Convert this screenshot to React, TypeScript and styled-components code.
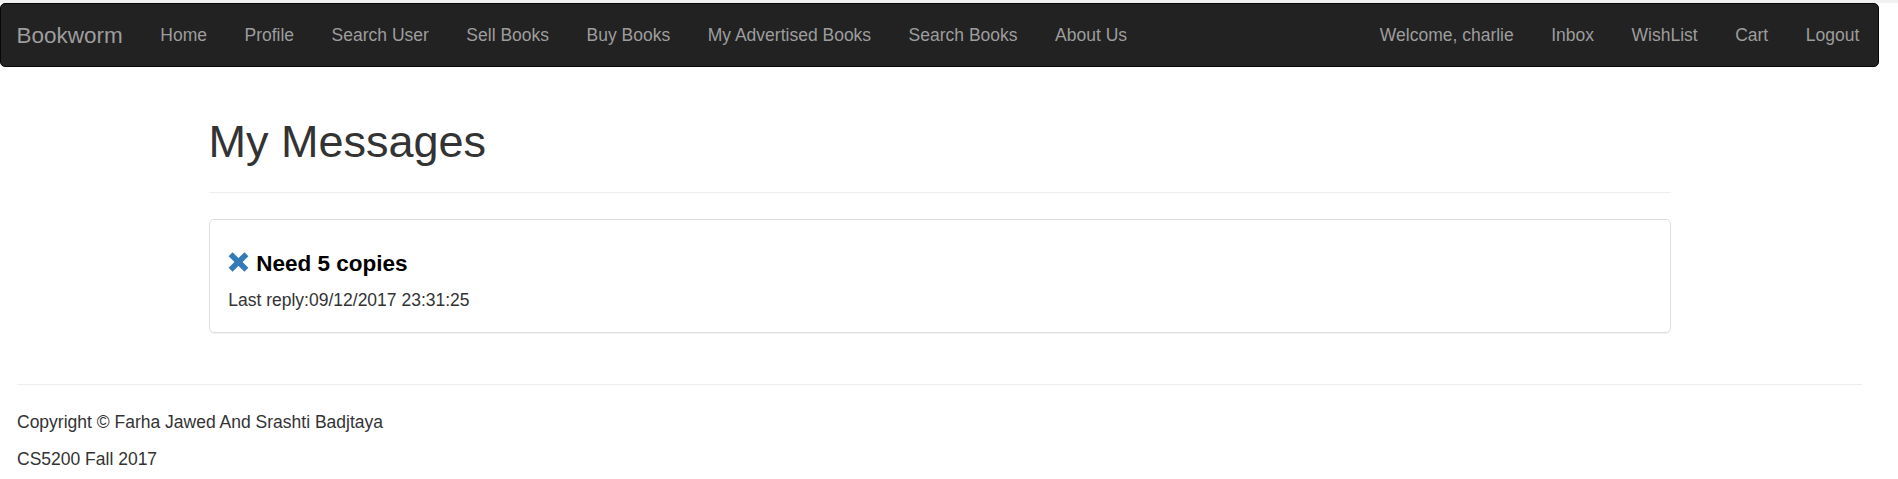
import React from "react";
import styled, { createGlobalStyle } from "styled-components";

const GlobalStyle = createGlobalStyle`
  html, body {
    margin: 0;
    padding: 0;
    overflow: hidden;
    background: #fff;
  }
  body {
    border-top: 3px solid #f0f0f0;
    font-family: "Liberation Sans", Arial, Helvetica, sans-serif;
    font-size: 17.5px;
    line-height: 25px;
    color: #333;
  }
  * { box-sizing: border-box; }
`;

const Page = styled.div`
  width: 1879px;
`;

const Navbar = styled.nav`
  display: flex;
  justify-content: space-between;
  align-items: stretch;
  height: 64px;
  background: #222;
  border: 1px solid #080808;
  border-radius: 5px;
  margin-bottom: 25px;
`;

const Brand = styled.a`
  display: block;
  padding: 18.5px 18.75px 18.5px 15.5px;
  font-size: 22.5px;
  line-height: 25px;
  color: #9d9d9d;
  text-decoration: none;
`;

const NavGroup = styled.div`
  display: flex;
  align-items: stretch;
`;

const NavList = styled.ul`
  display: flex;
  list-style: none;
  margin: 0;
  padding: 0;
`;

const NavLink = styled.a`
  display: block;
  padding: 18.5px 18.75px;
  line-height: 25px;
  font-size: 17.5px;
  color: #9d9d9d;
  text-decoration: none;
  white-space: nowrap;
`;

const Container = styled.main`
  width: 1462px;
  margin: 0 auto;
  padding-top: 25px;
`;

const Title = styled.h1`
  margin: 0 0 25px;
  font-size: 45px;
  line-height: 49.5px;
  font-weight: 500;
  color: #333;
`;

const Divider = styled.hr`
  margin: 0 0 26px;
  border: 0;
  border-top: 1px solid #eee;
  height: 0;
`;

const MessageCard = styled.section`
  border: 1px solid #ddd;
  border-radius: 5px;
  padding: 18.75px;
  box-shadow: 0 1px 1px rgba(0, 0, 0, 0.05);
`;

const MessageTitle = styled.h4`
  margin: 14px 0 11px;
  font-size: 22.5px;
  line-height: 24.75px;
  font-weight: 700;
  color: #000;
`;

const RemoveIcon = styled.svg`
  width: 21px;
  height: 20px;
  vertical-align: -1px;
  margin-right: 7px;
`;

const Meta = styled.p`
  margin: 0;
  color: #333;
`;

const Footer = styled.footer`
  margin-top: 51px;
  padding: 0 17px;
`;

const FooterRule = styled.hr`
  margin: 0 0 25px;
  border: 0;
  border-top: 1px solid #eee;
  height: 0;
`;

const FooterText = styled.p`
  margin: 0 0 12.5px;
  color: #333;
`;

const leftLinks = [
  "Home",
  "Profile",
  "Search User",
  "Sell Books",
  "Buy Books",
  "My Advertised Books",
  "Search Books",
  "About Us",
];

const rightLinks = ["Welcome, charlie", "Inbox", "WishList", "Cart", "Logout"];

export default function App() {
  return (
    <Page>
      <GlobalStyle />
      <Navbar>
        <NavGroup>
          <Brand href="#">Bookworm</Brand>
          <NavList>
            {leftLinks.map((l) => (
              <li key={l}>
                <NavLink href="#">{l}</NavLink>
              </li>
            ))}
          </NavList>
        </NavGroup>
        <NavList>
          {rightLinks.map((l) => (
            <li key={l}>
              <NavLink href="#">{l}</NavLink>
            </li>
          ))}
        </NavList>
      </Navbar>

      <Container>
        <Title>My Messages</Title>
        <Divider />
        <MessageCard>
          <MessageTitle>
            <RemoveIcon viewBox="0 0 21 20" aria-hidden="true">
              <g stroke="#337ab7" strokeWidth="5.6" strokeLinecap="butt">
                <line x1="2.6" y1="2.2" x2="18.4" y2="17.8" />
                <line x1="18.4" y1="2.2" x2="2.6" y2="17.8" />
              </g>
            </RemoveIcon>
            Need 5 copies
          </MessageTitle>
          <Meta>Last reply:09/12/2017 23:31:25</Meta>
        </MessageCard>
      </Container>

      <Footer>
        <FooterRule />
        <FooterText>Copyright © Farha Jawed And Srashti Badjtaya</FooterText>
        <FooterText>CS5200 Fall 2017</FooterText>
      </Footer>
    </Page>
  );
}
